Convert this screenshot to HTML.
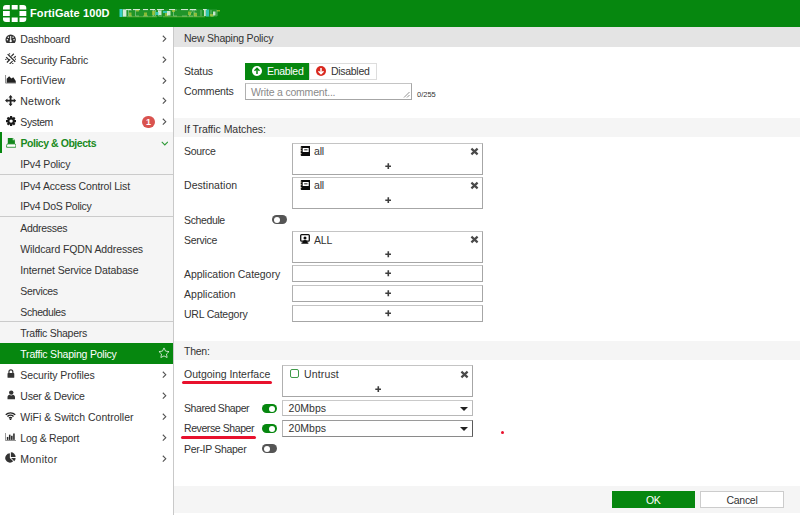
<!DOCTYPE html>
<html>
<head>
<meta charset="utf-8">
<title>FortiGate 100D</title>
<style>
*{box-sizing:border-box;margin:0;padding:0}
html,body{width:800px;height:515px;overflow:hidden;background:#fff}
body{font-family:"Liberation Sans",sans-serif;font-size:10.5px;color:#333;position:relative}
.abs{position:absolute}
#top{position:absolute;left:0;top:0;width:800px;height:27px;background:#06870f}
#top .brand{position:absolute;left:30px;top:6.500px;font-size:11px;line-height:13px;font-weight:bold;color:#fff;letter-spacing:0.1px;white-space:nowrap}
#side{position:absolute;left:0;top:27px;width:174px;height:488px;background:#fff;border-right:1px solid #c9c9c9}
.row{position:absolute;left:0;width:173px;height:21px;line-height:21px;white-space:nowrap;color:#333}
.row .t{position:absolute;left:20.300px;top:1px;letter-spacing:-0.2px}
.row .chev{position:absolute;left:162.300px;top:7.300px;width:4.600px;height:7.400px}
.sub{background:#f5f5f5;height:21.500px}
.sep{position:absolute;left:0;width:173px;height:1px;background:#cbcbcb}
#main{position:absolute;left:174px;top:27px;width:626px;height:488px;background:#fff}
.bar{position:absolute;left:0;width:626px;height:20px;line-height:22px;padding-left:10px;letter-spacing:-0.2px}
.lbl{position:absolute;left:10px;height:16px;line-height:17px;white-space:nowrap;letter-spacing:-0.2px}
.box{position:absolute;border:1px solid;border-color:#c4c4c4 #a6a6a6 #a6a6a6 #b0b0b0;background:#fff}
.plus{position:absolute;width:6.600px;height:6.600px;margin:0.200px 0 0 0.200px}
.x{position:absolute;width:9px;height:9px;margin:0.200px 0 0 0.200px}
.it{position:absolute;white-space:nowrap;letter-spacing:-0.2px;line-height:15px}

.ic{position:absolute}
.po{border-left:2px solid #06870f;height:22px!important;margin-top:-1px}
.po .t{color:#1a8a22;font-weight:bold;left:18.400px;letter-spacing:-0.55px}
.po .ic{margin-left:-2px}
.po .chev{margin-left:-2px}
.sel{background:#06870f;color:#fff}
.sel .t{color:#fff}
.badge{position:absolute;left:142.200px;top:5px;width:12.600px;height:12px;border-radius:6.300px;background:#d9534f;color:#fff;font-size:9px;font-weight:bold;line-height:12px;text-align:center}

.btn{position:absolute;line-height:17px;white-space:nowrap;letter-spacing:-0.300px}
.en{background:#06870f;color:#fff}
.dis{background:#fff;color:#333;border:1px solid #ddd;line-height:15px}
.dis svg{top:2px!important;left:6px!important}
.dis span{left:21px!important}
.tog{position:absolute;width:14.500px;height:9px;border-radius:4.500px;background:#555}
.tog i{position:absolute;left:1.500px;top:1.500px;width:6px;height:6px;border-radius:3px;background:#fff}
.tog.on{background:#06870f}
.tog.on i{left:7px}
.red{position:absolute;height:3px;border-radius:1.500px;background:#e8112d}
.arr{position:absolute;right:4.500px;top:5.500px;width:0;height:0;border-left:4px solid transparent;border-right:4px solid transparent;border-top:4.500px solid #222}
.f{font-weight:inherit}
</style>
</head>
<body>
<div id="top">
<svg class="abs" style="left:3px;top:5px;width:24px;height:17px" viewBox="0 0 24 17">
<g fill="#fff">
<path d="M0 4.500V3a3 3 0 0 1 3-3h3.800v4.500z"/>
<rect x="8.700" y="0" width="6" height="4.500"/>
<path d="M16.500 0H20.300a3 3 0 0 1 3 3v1.500H16.500z"/>
<rect x="0" y="6" width="6.800" height="5"/>
<rect x="16.500" y="6" width="6.800" height="5"/>
<path d="M0 12.500H6.800V17H3a3 3 0 0 1-3-3z"/>
<rect x="8.700" y="12.500" width="6" height="4.500"/>
<path d="M16.500 12.500h6.800V14a3 3 0 0 1-3 3H16.500z"/>
</g></svg>
<div class="brand">FortiGate 100D</div>
<svg class="abs" style="left:119px;top:8px;width:104px;height:10px" viewBox="0 0 104 10">
<rect x="7" y="1.200" width="91" height="7.800" fill="#7fc987" opacity=".22"/>
<g fill="none" stroke="#a5dbab" stroke-width="1" opacity=".55">
<path d="M13 2h-3.500v6H13M20 2h-3.500v6H20M29 8h-5M34.500 2v6M33 2h3.500v6H33M43 2h-3.500v6H43M58 2h-3.500v6H58M63 8h5M70 2h4l-4 6h4M78 2h-3v6h3M75 5h2.500M82 2v6M92 2v6h3M98 2v6"/>
</g>
<rect x="0.500" y="1" width="3" height="8" fill="#35cfc6"/>
<rect x="3.800" y="1.300" width="3.600" height="7.400" fill="#e4f5e8" opacity=".92"/>
<g fill="#fff" opacity=".8">
<rect x="7" y="1" width="5" height="1.100"/><rect x="14" y="1" width="7" height="1.100"/><rect x="24" y="1" width="5" height="1.100"/><rect x="31" y="1" width="5" height="1.100"/>
<rect x="38" y="1" width="7" height="1.100"/><rect x="50" y="1" width="6" height="1.100"/><rect x="62" y="1" width="7" height="1.100"/><rect x="71" y="1" width="6" height="1.100"/><rect x="84" y="1" width="4" height="1.100"/>
</g>
<g fill="#b4cc3a" opacity=".7">
<rect x="10" y="4.500" width="2.500" height="3.500"/><rect x="17" y="2" width="3" height="1.500"/><rect x="25" y="4.500" width="3" height="3.500"/><rect x="33" y="3" width="3" height="4"/>
<rect x="53" y="2" width="3" height="2"/><rect x="46" y="5" width="3" height="3"/><rect x="69" y="3.500" width="3" height="3.500"/><rect x="75" y="5" width="3" height="3"/><rect x="91" y="6" width="3" height="2.500"/><rect x="98" y="2" width="3" height="1.500"/>
</g>
<g fill="#e6f6ea" opacity=".85">
<rect x="39" y="2.500" width="3.500" height="4.500"/><rect x="48" y="3" width="3.500" height="4.500"/><rect x="85" y="2" width="1.800" height="6"/><rect x="94" y="3.500" width="2.500" height="4"/>
</g>
<g fill="#35cfc6" opacity=".85">
<rect x="36.500" y="4" width="3" height="3"/><rect x="44" y="3" width="4" height="2"/><rect x="87" y="1.500" width="3" height="7"/>
</g>
<g fill="#b9d467" opacity=".45">
<rect x="8" y="8.300" width="30" height="1"/><rect x="44" y="8.300" width="42" height="1"/>
</g>
</svg>
</div>
<div id="side">
<div class="row" style="top:1px"><svg class="ic" style="left:5px;top:5.800px;width:11.400px;height:9.600px" viewBox="0 0 13 11"><path d="M6.5 0.600A6 6 0 0 0 0.500 6.600c0 1.300.4 2.500 1.100 3.400.150.200.3.300.5.300h8.800c.2 0 .350-.1.500-.3.700-.900 1.100-2.100 1.100-3.400A6 6 0 0 0 6.500.600z" fill="#333"/><circle cx="2.700" cy="6.700" r=".85" fill="#fff"/><circle cx="3.800" cy="3.800" r=".85" fill="#fff"/><circle cx="10.300" cy="6.700" r=".85" fill="#fff"/><circle cx="9.200" cy="3.800" r=".85" fill="#fff"/><path d="M6.500 2.200V8" stroke="#fff" stroke-width="1.200"/><circle cx="6.500" cy="8.300" r="1.300" fill="#fff"/></svg><span class="t"><b class="f" style="letter-spacing:-0.20px">Dashboard</b></span><svg class="chev" viewBox="0 0 6 10"><path d="M1 1 L5 5 L1 9" fill="none" stroke="#555" stroke-width="1.5"/></svg></div>
<div class="row" style="top:21.7px"><svg class="ic" style="left:5px;top:4.300px;width:11.400px;height:11.400px" viewBox="0 0 12 12"><g stroke="#2a2a2a" stroke-width="1.300" fill="none"><path d="M2.800 1.200L10.800 9.200"/><path d="M1.200 4.400L4.200 7.400"/><path d="M9.300 .800L6.600 3.500M5.400 6.600L2 10M8 8.500L4.800 11.700" stroke-width="1.200"/><path d="M9.200 5.400L11.300 3.300"/></g><g fill="#2a2a2a"><circle cx="4.800" cy=".9" r=".75"/><circle cx=".9" cy="6.800" r=".7"/><circle cx="11.200" cy="6.500" r=".7"/><circle cx="8.200" cy="11.200" r=".75"/></g></svg><span class="t"><b class="f" style="letter-spacing:-0.15px">Security Fabric</b></span><svg class="chev" viewBox="0 0 6 10"><path d="M1 1 L5 5 L1 9" fill="none" stroke="#555" stroke-width="1.5"/></svg></div>
<div class="row" style="top:42.4px"><svg class="ic" style="left:4.800px;top:5.600px;width:11.600px;height:8.600px" viewBox="0 0 12 9"><path d="M.5 0v8.500H12" stroke="#8a8a8a" stroke-width="1" fill="none"/><path d="M1.700 8V3.800L4.300 1.300 6.600 3.600 8.600 2.400 11.200 6.200V8z" fill="#222"/></svg><span class="t"><b class="f" style="letter-spacing:0.16px">FortiView</b></span><svg class="chev" viewBox="0 0 6 10"><path d="M1 1 L5 5 L1 9" fill="none" stroke="#555" stroke-width="1.5"/></svg></div>
<div class="row" style="top:63.2px"><svg class="ic" style="left:5px;top:4.700px;width:11.200px;height:11.200px" viewBox="0 0 12 12"><path d="M6 0L8.200 2.600H6.950V5.050H9.400V3.800L12 6 9.400 8.200V6.950H6.950V9.400H8.200L6 12 3.800 9.400H5.050V6.950H2.600V8.200L0 6 2.600 3.800V5.050H5.050V2.600H3.800z" fill="#222"/></svg><span class="t"><b class="f" style="letter-spacing:0.23px">Network</b></span><svg class="chev" viewBox="0 0 6 10"><path d="M1 1 L5 5 L1 9" fill="none" stroke="#555" stroke-width="1.5"/></svg></div>
<div class="row" style="top:84px"><svg class="ic" style="left:5.600px;top:5px;width:10.200px;height:10.200px" viewBox="-6 -6 12 12"><g fill="#1a1a1a"><circle r="4.400"/><rect x="-1.300" y="-6" width="2.600" height="12" rx=".3"/><rect x="-1.300" y="-6" width="2.600" height="12" rx=".3" transform="rotate(45)"/><rect x="-1.300" y="-6" width="2.600" height="12" rx=".3" transform="rotate(90)"/><rect x="-1.300" y="-6" width="2.600" height="12" rx=".3" transform="rotate(135)"/></g><circle r="2" fill="#fff"/></svg><span class="t"><b class="f" style="letter-spacing:-0.39px">System</b></span><span class="badge">1</span><svg class="chev" viewBox="0 0 6 10"><path d="M1 1 L5 5 L1 9" fill="none" stroke="#555" stroke-width="1.5"/></svg></div>
<div class="row sub po" style="top:106px"><svg class="ic" style="left:5.600px;top:6px;width:10.400px;height:10px" viewBox="0 0 10.400 10"><path d="M1.800 0H6.800L8.900 2.100V6.200H1.800z" fill="#12881c"/><path d="M6.700 0v2.200h2.200z" fill="#bfe3c2"/><path d="M.6 9.300V7.300Q.6 5.900 2 5.900H8.400Q9.800 5.900 9.800 7.300V9.300z" fill="#fff" stroke="#2a9433" stroke-width=".9"/></svg><span class="t"><b class="f" style="letter-spacing:-0.45px">Policy &amp; Objects</b></span><svg class="chev" style="left:160.800px;top:9.300px;width:7.600px;height:4.800px" viewBox="0 0 10 6"><path d="M1 1 L5 5 L9 1" fill="none" stroke="#2e9a37" stroke-width="1.400"/></svg></div>
<div class="row sub" style="top:126px;height:22px"><span class="t"><b class="f" style="letter-spacing:-0.18px">IPv4 Policy</b></span></div>
<div class="row sub" style="top:147.5px"><span class="t"><b class="f" style="letter-spacing:-0.15px">IPv4 Access Control List</b></span></div>
<div class="row sub" style="top:168px;height:22px"><span class="t"><b class="f" style="letter-spacing:-0.27px">IPv4 DoS Policy</b></span></div>
<div class="row sub" style="top:189.5px"><span class="t"><b class="f" style="letter-spacing:-0.31px">Addresses</b></span></div>
<div class="row sub" style="top:210.5px"><span class="t"><b class="f" style="letter-spacing:-0.12px">Wildcard FQDN Addresses</b></span></div>
<div class="row sub" style="top:231.5px"><span class="t"><b class="f" style="letter-spacing:-0.13px">Internet Service Database</b></span></div>
<div class="row sub" style="top:252.5px"><span class="t"><b class="f" style="letter-spacing:-0.36px">Services</b></span></div>
<div class="row sub" style="top:273.5px"><span class="t"><b class="f" style="letter-spacing:-0.42px">Schedules</b></span></div>
<div class="row sub" style="top:294.5px"><span class="t"><b class="f" style="letter-spacing:-0.26px">Traffic Shapers</b></span></div>
<div class="row sel" style="top:316px"><span class="t"><b class="f" style="letter-spacing:-0.21px">Traffic Shaping Policy</b></span><svg class="chev" style="left:158.300px;top:3.800px;width:12px;height:11px" viewBox="0 0 13 12"><path d="M6.500 1l1.700 3.500 3.800.5-2.800 2.700.7 3.800-3.400-1.800-3.400 1.800.7-3.800L1 5l3.800-.5z" fill="none" stroke="#fff" stroke-opacity=".8" stroke-width="1"/></svg></div>
<div class="row" style="top:337px"><svg class="ic" style="left:7px;top:5.200px;width:7.800px;height:9.300px" viewBox="0 0 9 11"><path d="M2.200 5V3.300a2.300 2.300 0 0 1 4.600 0V5" fill="none" stroke="#333" stroke-width="1.400"/><rect x=".5" y="4.800" width="8" height="5.700" rx=".8" fill="#333"/></svg><span class="t"><b class="f" style="letter-spacing:-0.09px">Security Profiles</b></span><svg class="chev" viewBox="0 0 6 10"><path d="M1 1 L5 5 L1 9" fill="none" stroke="#555" stroke-width="1.5"/></svg></div>
<div class="row" style="top:358px"><svg class="ic" style="left:7px;top:5.300px;width:8.500px;height:9.600px" viewBox="0 0 10 11"><circle cx="5" cy="2.900" r="2.600" fill="#333"/><path d="M.6 10.600V8.200c0-1.500 1.200-2.500 2.500-2.700.5.500 1.200.8 1.900.8s1.400-.3 1.900-.8c1.300.2 2.500 1.200 2.500 2.700v2.400z" fill="#333"/></svg><span class="t"><b class="f" style="letter-spacing:-0.21px">User &amp; Device</b></span><svg class="chev" viewBox="0 0 6 10"><path d="M1 1 L5 5 L1 9" fill="none" stroke="#555" stroke-width="1.5"/></svg></div>
<div class="row" style="top:379px"><svg class="ic" style="left:5.300px;top:5.800px;width:11px;height:8.200px" viewBox="0 0 13 9.700"><g fill="none" stroke="#222" stroke-width="1.700"><path d="M.9 3.300a8 8 0 0 1 11.200 0"/><path d="M2.900 5.400a5.100 5.100 0 0 1 7.200 0"/><path d="M4.800 7.300a2.400 2.400 0 0 1 3.400 0"/></g><circle cx="6.500" cy="8.700" r="1" fill="#222"/></svg><span class="t"><b class="f" style="letter-spacing:-0.00px">WiFi &amp; Switch Controller</b></span><svg class="chev" viewBox="0 0 6 10"><path d="M1 1 L5 5 L1 9" fill="none" stroke="#555" stroke-width="1.5"/></svg></div>
<div class="row" style="top:400px"><svg class="ic" style="left:5px;top:6px;width:11px;height:8px" viewBox="0 0 12 8.700"><path d="M.5 0v8.200H12" stroke="#8a8a8a" stroke-width="1" fill="none"/><g fill="#2a2a2a"><rect x="2" y="4.300" width="1.700" height="3.200"/><rect x="4.300" y="1.800" width="1.700" height="5.700"/><rect x="6.600" y="3" width="1.700" height="4.500"/><rect x="8.900" y=".5" width="1.700" height="7"/></g></svg><span class="t"><b class="f" style="letter-spacing:-0.26px">Log &amp; Report</b></span><svg class="chev" viewBox="0 0 6 10"><path d="M1 1 L5 5 L1 9" fill="none" stroke="#555" stroke-width="1.5"/></svg></div>
<div class="row" style="top:421px"><svg class="ic" style="left:5px;top:4.300px;width:11px;height:10.800px" viewBox="0 0 12 12"><path d="M5.300 1.500v5.200l3.700 3.700A5.200 5.200 0 1 1 5.300 1.500z" fill="#333"/><path d="M6.400.3A5.300 5.300 0 0 1 11.700 5.600H6.400z" fill="#333"/><path d="M6.700 6.700h5a5.200 5.200 0 0 1-1.500 3.500z" fill="#333"/></svg><span class="t"><b class="f" style="letter-spacing:0.31px">Monitor</b></span><svg class="chev" viewBox="0 0 6 10"><path d="M1 1 L5 5 L1 9" fill="none" stroke="#555" stroke-width="1.5"/></svg></div>
<div class="sep" style="top:147px"></div>
<div class="sep" style="top:189px"></div>
<div class="sep" style="top:294px"></div>
</div>
<div id="main">
<div class="bar" style="top:0;background:#e4e4e4;height:20px"><b class="f" style="letter-spacing:-0.23px">New Shaping Policy</b></div>
<div class="bar" style="top:91px;background:#f5f5f5;height:19.400px"><b class="f" style="letter-spacing:-0.04px">If Traffic Matches:</b></div>
<div class="bar" style="top:314px;background:#f5f5f5;height:19.400px;line-height:20px"><b class="f" style="letter-spacing:-0.25px">Then:</b></div>
<div class="bar" style="top:459px;background:#f5f5f5;height:26.500px"></div>
<div class="lbl" style="top:36px;"><b class="f" style="letter-spacing:-0.13px">Status</b></div>
<div class="btn en" style="left:71px;top:35.500px;width:64px;height:17px"><svg class="abs" style="left:7px;top:3px;width:10px;height:10px" viewBox="0 0 10 10"><circle cx="5" cy="5" r="5" fill="#fff"/><path d="M5 8V2.500M2.500 4.800L5 2.300l2.500 2.500" fill="none" stroke="#06870f" stroke-width="1.500"/></svg><span style="position:absolute;left:22px;top:0">Enabled</span></div>
<div class="btn dis" style="left:135px;top:35.500px;width:68px;height:17px"><svg class="abs" style="left:7px;top:3px;width:10px;height:10px" viewBox="0 0 10 10"><circle cx="5" cy="5" r="5" fill="#d9281e"/><path d="M5 2v5.500M2.500 5.200L5 7.700l2.500-2.500" fill="none" stroke="#fff" stroke-width="1.500"/></svg><span style="position:absolute;left:22px;top:0">Disabled</span></div>
<div class="lbl" style="top:56px;"><b class="f" style="letter-spacing:-0.13px">Comments</b></div>
<div class="box" style="left:71px;top:56px;width:167px;height:17px"><span class="it" style="left:5px;top:1px;color:#8a8a8a">Write a comment...</span><svg class="abs" style="right:1px;bottom:1px;width:7px;height:7px" viewBox="0 0 7 7"><path d="M6.500 1L1 6.500M6.500 4L4 6.500" stroke="#777" stroke-width=".8"/></svg></div>
<div class="abs" style="left:243px;top:63px;font-size:7.500px;line-height:9px;color:#333">0/255</div>
<div class="lbl" style="top:116px;"><b class="f" style="letter-spacing:-0.31px">Source</b></div>
<div class="box" style="left:118px;top:116px;width:191px;height:32px"></div>
<svg class="abs" style="left:125.5px;top:119px;width:10.500px;height:10px" viewBox="0 0 10.500 10"><rect x=".7" y="0" width="9.800" height="10" rx=".9" fill="#0a0a0a"/><rect x="2.700" y="2" width="6" height="4" fill="#fff"/><rect x="4.200" y="3.200" width="3.300" height="1.200" fill="#444"/><g fill="#f3e6d2"><rect x="0" y="1.600" width="1.500" height="1"/><rect x="0" y="4.200" width="1.500" height="1"/><rect x="0" y="7.100" width="1.500" height="1"/></g></svg>
<span class="it" style="left:140px;top:117px">all</span>
<svg class="x" style="left:296px;top:120px" viewBox="0 0 9 9"><path d="M1.400 1.600L7.600 7.400M7.600 1.600L1.400 7.400" stroke="#4a4a4a" stroke-width="2.200"/></svg>
<svg class="plus" style="left:210.4px;top:135.7px" viewBox="0 0 7 7"><path d="M3.500 .3v6.400M.3 3.500h6.400" stroke="#3d3d3d" stroke-width="1.700"/></svg>
<div class="lbl" style="top:150px;"><b class="f" style="letter-spacing:0.06px">Destination</b></div>
<div class="box" style="left:118px;top:150px;width:191px;height:32px"></div>
<svg class="abs" style="left:125.5px;top:153px;width:10.500px;height:10px" viewBox="0 0 10.500 10"><rect x=".7" y="0" width="9.800" height="10" rx=".9" fill="#0a0a0a"/><rect x="2.700" y="2" width="6" height="4" fill="#fff"/><rect x="4.200" y="3.200" width="3.300" height="1.200" fill="#444"/><g fill="#f3e6d2"><rect x="0" y="1.600" width="1.500" height="1"/><rect x="0" y="4.200" width="1.500" height="1"/><rect x="0" y="7.100" width="1.500" height="1"/></g></svg>
<span class="it" style="left:140px;top:151px">all</span>
<svg class="x" style="left:296px;top:154px" viewBox="0 0 9 9"><path d="M1.400 1.600L7.600 7.400M7.600 1.600L1.400 7.400" stroke="#4a4a4a" stroke-width="2.200"/></svg>
<svg class="plus" style="left:210.4px;top:169.7px" viewBox="0 0 7 7"><path d="M3.500 .3v6.400M.3 3.500h6.400" stroke="#3d3d3d" stroke-width="1.700"/></svg>
<div class="lbl" style="top:184.5px;"><b class="f" style="letter-spacing:-0.37px">Schedule</b></div>
<div class="tog" style="left:98px;top:188px"><i></i></div>
<div class="lbl" style="top:204.5px;"><b class="f" style="letter-spacing:-0.29px">Service</b></div>
<div class="box" style="left:118px;top:204px;width:191px;height:32px"></div>
<svg class="abs" style="left:125.8px;top:207.2px;width:10px;height:10px" viewBox="0 0 10 10"><rect x=".7" y=".7" width="8.600" height="6.500" rx=".9" fill="none" stroke="#111" stroke-width="1.300"/><circle cx="5" cy="4" r="1.500" fill="#0a0a0a"/><path d="M2.400 8.900C2.400 6.700 3.600 5.900 5 5.900S7.600 6.700 7.600 8.900z" fill="#0a0a0a"/><rect x="1.300" y="8.600" width="7.200" height="1.100" rx=".4" fill="#0a0a0a"/></svg>
<span class="it" style="left:140px;top:206px">ALL</span>
<svg class="x" style="left:296px;top:208px" viewBox="0 0 9 9"><path d="M1.400 1.600L7.600 7.400M7.600 1.600L1.400 7.400" stroke="#4a4a4a" stroke-width="2.200"/></svg>
<svg class="plus" style="left:210.4px;top:224.2px" viewBox="0 0 7 7"><path d="M3.500 .3v6.400M.3 3.500h6.400" stroke="#3d3d3d" stroke-width="1.700"/></svg>
<div class="lbl" style="top:239px;"><b class="f" style="letter-spacing:-0.04px">Application Category</b></div>
<div class="box" style="left:118px;top:238px;width:191px;height:17px"></div>
<svg class="plus" style="left:210.4px;top:243.2px" viewBox="0 0 7 7"><path d="M3.500 .3v6.400M.3 3.500h6.400" stroke="#3d3d3d" stroke-width="1.700"/></svg>
<div class="lbl" style="top:259px;"><b class="f" style="letter-spacing:0.02px">Application</b></div>
<div class="box" style="left:118px;top:258px;width:191px;height:17px"></div>
<svg class="plus" style="left:210.4px;top:263.2px" viewBox="0 0 7 7"><path d="M3.500 .3v6.400M.3 3.500h6.400" stroke="#3d3d3d" stroke-width="1.700"/></svg>
<div class="lbl" style="top:279px;"><b class="f" style="letter-spacing:-0.22px">URL Category</b></div>
<div class="box" style="left:118px;top:278px;width:191px;height:17px"></div>
<svg class="plus" style="left:210.4px;top:283.2px" viewBox="0 0 7 7"><path d="M3.500 .3v6.400M.3 3.500h6.400" stroke="#3d3d3d" stroke-width="1.700"/></svg>
<div class="lbl" style="top:339px;"><b class="f" style="letter-spacing:-0.01px">Outgoing Interface</b></div>
<div class="red" style="left:8px;top:353.500px;width:90px"></div>
<div class="box" style="left:108px;top:338px;width:191px;height:32px"></div>
<div class="abs" style="left:116px;top:342px;width:9px;height:9px;border:1.300px solid #3f9a49;border-radius:2px"></div>
<span class="it" style="left:130px;top:340px;letter-spacing:0.150px">Untrust</span>
<svg class="x" style="left:286px;top:343px" viewBox="0 0 9 9"><path d="M1.400 1.600L7.600 7.400M7.600 1.600L1.400 7.400" stroke="#4a4a4a" stroke-width="2.200"/></svg>
<svg class="plus" style="left:200.4px;top:358.7px" viewBox="0 0 7 7"><path d="M3.500 .3v6.400M.3 3.500h6.400" stroke="#3d3d3d" stroke-width="1.700"/></svg>
<div class="lbl" style="top:373px;"><b class="f" style="letter-spacing:-0.42px">Shared Shaper</b></div>
<div class="tog on" style="left:88px;top:377px"><i></i></div>
<div class="box" style="left:108px;top:373px;width:191px;height:16px;border-color:#cacaca #b8b8b8 #b8b8b8 #c4c4c4"><span class="it" style="left:5.500px;top:-0.500px;letter-spacing:0.050px">20Mbps</span><i class="arr"></i></div>
<div class="lbl" style="top:393px;"><b class="f" style="letter-spacing:-0.41px">Reverse Shaper</b></div>
<div class="tog on" style="left:88px;top:397px"><i></i></div>
<div class="box" style="left:108px;top:393px;width:191px;height:17px;border-color:#9a9a9a #5a5a5a #8a8a8a #b4b4b4"><span class="it" style="left:5.500px;top:-0.200px;letter-spacing:0.050px">20Mbps</span><i class="arr"></i></div>
<div class="red" style="left:7.300px;top:409px;width:74.500px"></div>
<div class="lbl" style="top:413.5px;"><b class="f" style="letter-spacing:-0.31px">Per-IP Shaper</b></div>
<div class="tog" style="left:88px;top:417px"><i></i></div>
<div class="abs" style="left:327px;top:404px;width:3px;height:3px;border-radius:2px;background:#e8112d"></div>
<div class="abs" style="left:437.500px;top:464px;width:83.500px;height:17px;background:#06870f;color:#fff;text-align:center;line-height:19px;font-size:10.500px;letter-spacing:-0.300px">OK</div>
<div class="abs" style="left:526px;top:464px;width:84px;height:17px;background:#fff;border:1px solid #ccc;color:#333;text-align:center;line-height:17px;font-size:10.500px;letter-spacing:-0.300px">Cancel</div>
</div>
</body>
</html>
